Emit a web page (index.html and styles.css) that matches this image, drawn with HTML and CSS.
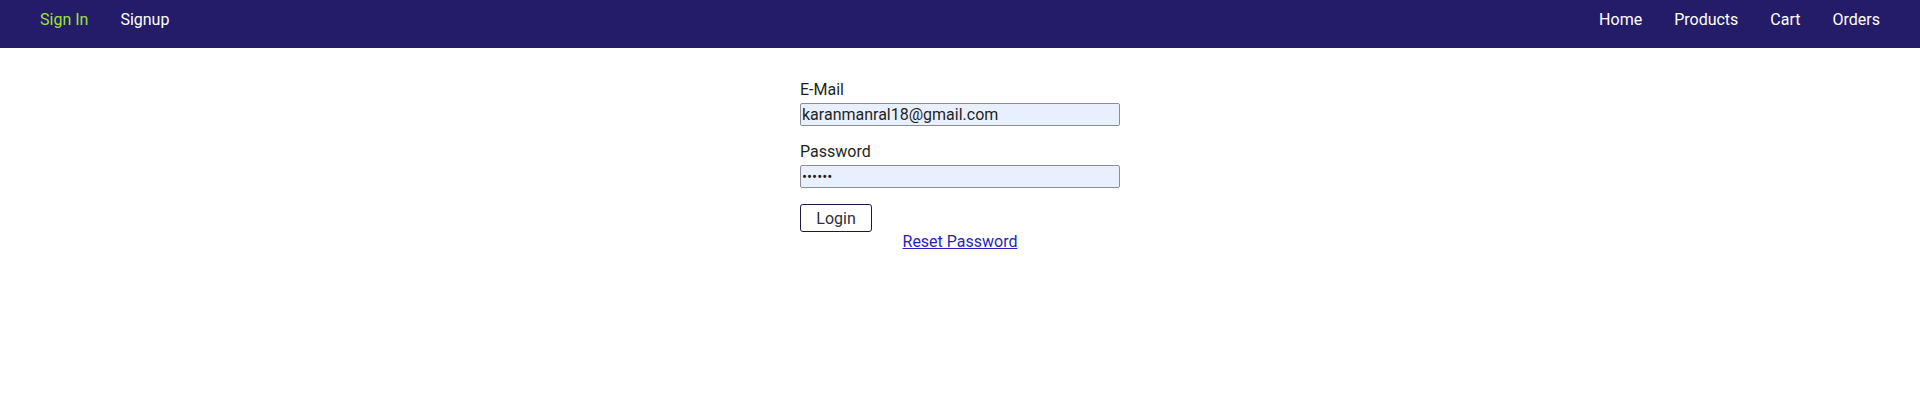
FILE: index.html
```html
<!DOCTYPE html>
<html lang="en">
<head>
<meta charset="utf-8">
<title>Login</title>
<link rel="stylesheet" href="styles.css">
</head>
<body>
<header class="main-header">
  <nav class="nav nav-left">
    <a class="nav-link active" href="#">Sign In</a>
    <a class="nav-link" href="#">Signup</a>
  </nav>
  <nav class="nav nav-right">
    <a class="nav-link" href="#">Home</a>
    <a class="nav-link" href="#">Products</a>
    <a class="nav-link" href="#">Cart</a>
    <a class="nav-link" href="#">Orders</a>
  </nav>
</header>
<main class="main">
  <form class="login-form">
    <div class="form-control">
      <label for="email">E-Mail</label>
      <input type="email" id="email" value="karanmanral18@gmail.com">
    </div>
    <div class="form-control">
      <label for="password">Password</label>
      <input type="password" id="password" value="123456">
    </div>
    <div class="actions">
      <button class="btn" type="button">Login</button>
    </div>
    <div class="centered">
      <a class="reset-link" href="#">Reset Password</a>
    </div>
  </form>
</main>
</body>
</html>
```
FILE: styles.css
```css
* { box-sizing: border-box; }
html, body { margin: 0; padding: 0; }
body {
  font-family: Roboto, "Liberation Sans", sans-serif;
  font-size: 16px;
  color: #1f1f1f;
  background: #ffffff;
}
.main-header {
  height: 48px;
  background: #241c68;
  display: flex;
  align-items: flex-start;
  justify-content: space-between;
  padding: 10px 40px 0;
}
.nav {
  display: flex;
  gap: 32px;
}
.nav-link {
  color: #ffffff;
  text-decoration: none;
  font-size: 16px;
  line-height: 19px;
}
.nav-link.active { color: #9de23f; }
.main {
  padding-top: 32px;
}
.login-form {
  width: 320px;
  margin: 0 auto;
}
.form-control {
  display: flex;
  flex-direction: column;
  margin-bottom: 16px;
}
.form-control label {
  line-height: 19px;
  margin-bottom: 4px;
}
.form-control input {
  font-family: Roboto, "Liberation Sans", sans-serif;
  font-size: 16px;
  line-height: 19px;
  height: 23px;
  padding: 1px 1px;
  border: 1px solid #8d8d93;
  border-radius: 2px;
  background: #e8f0fe;
  color: #1f1f1f;
  outline: none;
}
.form-control input[type="password"] {
  font-size: 15px;
  letter-spacing: 0;
}
.actions { display: flex; }
.btn {
  font-family: Roboto, "Liberation Sans", sans-serif;
  font-size: 16px;
  width: 72px;
  height: 28px;
  padding: 0;
  background: #ffffff;
  color: #2f2d3d;
  border: 1px solid #1e1848;
  border-radius: 3px;
}
.centered {
  text-align: center;
  line-height: 19px;
}
.reset-link {
  color: #2a1fbf;
  text-decoration: underline;
}
```
